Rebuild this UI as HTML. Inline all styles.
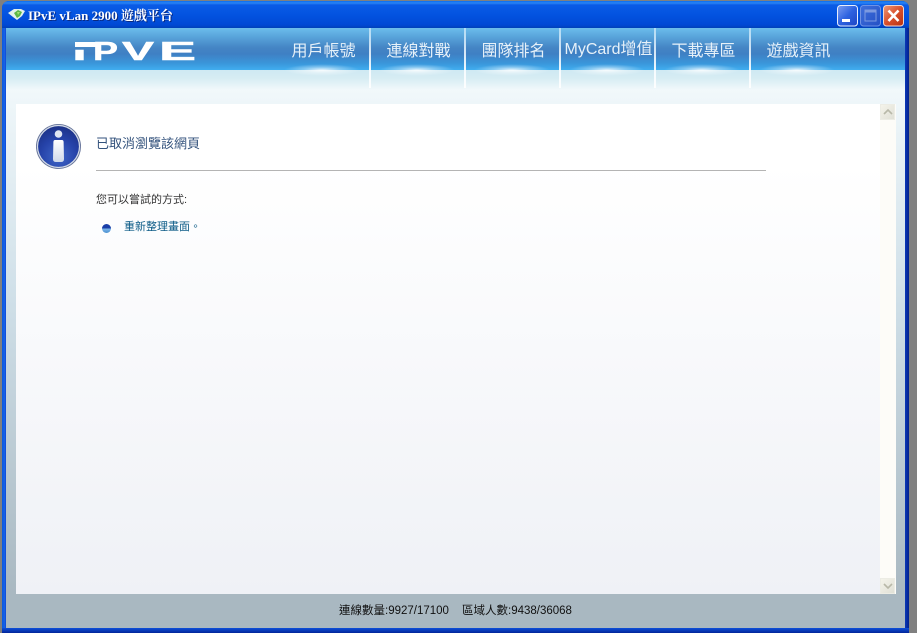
<!DOCTYPE html>
<html>
<head>
<meta charset="utf-8">
<title>IPvE vLan 2900</title>
<style>
html,body{margin:0;padding:0;width:917px;height:633px;overflow:hidden;background:#808080;font-family:"Liberation Sans","Noto Sans CJK TC",sans-serif}
div{position:absolute;box-sizing:border-box}
#win{left:2px;top:1px;width:907px;height:632px;background:linear-gradient(90deg,#0a5ae0 0,#1a62e6 3px,#0a3fd0 4px);border-radius:7px 7px 0 0;overflow:hidden}
#title{left:0;top:0;width:907px;height:27px;background:linear-gradient(180deg,#0a6ef0 0,#2a84f4 2px,#0a5be6 4px,#0353e0 14px,#0048d4 24px,#0040b8 27px)}
#rb{left:903px;top:27px;width:4px;height:605px;background:linear-gradient(90deg,#0a38b8,#02208c)}
#bb{left:0;top:627px;width:907px;height:5px;background:linear-gradient(180deg,#0e4fd8,#02259a)}
#ttext{left:26px;top:7px;font:bold 13px/16px "Liberation Serif","Noto Serif CJK SC",serif;color:#fff;white-space:nowrap;text-shadow:1px 1px 0 #0a2a80}
#client{left:4px;top:27px;width:899px;height:600px;background:linear-gradient(180deg,#f2f8fb 60px,#eef6f9 76px,#cfdfe8 272px,#a9b8c1 566px,#a9b8c1 600px)}
#hdr{left:0;top:0;width:899px;height:42px;background:linear-gradient(180deg,#6cbdec 0,#5aa6dc 8px,#4484c4 20px,#3f80c4 26px,#3a98dc 36px,#40aef0 42px)}
#sub{left:0;top:42px;width:899px;height:20px;background:linear-gradient(180deg,#cfe9f3 0,#d6ecf3 8px,#edf6fa 18px,#f2f8fb 20px)}
.sep{top:0;width:2px;height:60px;background:linear-gradient(180deg,rgba(210,235,250,.7),rgba(240,248,255,.85) 40%,rgba(248,252,255,.95) 70%,rgba(255,255,255,.9))}
.nav{top:13px;width:95px;height:22px;text-align:center;font-size:16px;line-height:22px;color:#e6f1f9;white-space:nowrap;font-family:"Liberation Sans","WenQuanYi Zen Hei",sans-serif}
.glow{top:36px;width:76px;height:12px;background:radial-gradient(ellipse at center,rgba(255,255,255,.85) 0,rgba(255,255,255,.35) 35%,rgba(255,255,255,0) 70%)}
#main{left:10px;top:76px;width:864px;height:490px;background:linear-gradient(180deg,#fff 0,#fff 60px,#eff1f6 490px)}
#sb{left:874px;top:76px;width:16px;height:490px;background:#fdfcf8}
.sbtn{left:0;width:15px;height:16px;background:linear-gradient(135deg,#f4f3ea,#e0e0d6);border:1px solid #ecece4}
#h1{left:80px;top:31px;font-size:13px;line-height:18px;color:#33527c;white-space:nowrap}
#hr{left:80px;top:66px;width:670px;height:1px;background:#b4b4b4}
#p1{left:80px;top:88px;font-size:11px;line-height:17px;color:#333;white-space:nowrap}
#lnk{left:108px;top:115px;font-size:11px;line-height:17px;color:#0a5a86;white-space:nowrap}
#dot{left:86px;top:120px;width:9px;height:9px;border-radius:50%;background:linear-gradient(180deg,#1a3fa8 0,#1a3fa8 45%,#7ab4e8 55%,#4a90d0 100%)}
#st{left:0;top:567px;width:899px;height:33px;font-size:11.5px;line-height:33px;color:#111;white-space:pre}
#st span{position:absolute;top:0}
</style>
</head>
<body>
<div id="win">
  <div id="title"></div>
  <svg style="position:absolute;left:6px;top:7px" width="18" height="14" viewBox="0 0 18 14">
    <path d="M0 5 L6 1 L13 1 L17 3 L14 8 L9 12 L5 9 Z" fill="#e2f2ea"/>
    <path d="M6 5 L10 2 L14 4 L12 8 L9 10 Z" fill="#5cb845"/>
    <path d="M9 4 L12 4 L10 7 Z" fill="#a4e070"/>
  </svg>
  <div id="ttext">IPvE vLan 2900 遊戲平台</div>

  <svg style="position:absolute;left:835px;top:4px" width="68" height="22" viewBox="0 0 68 22">
    <defs>
      <linearGradient id="bl" x1="0" y1="0" x2="1" y2="1"><stop offset="0" stop-color="#7d9ff2"/><stop offset=".5" stop-color="#2d62e0"/><stop offset="1" stop-color="#1c45c4"/></linearGradient>
      <linearGradient id="bd" x1="0" y1="0" x2="1" y2="1"><stop offset="0" stop-color="#3f6fdc"/><stop offset="1" stop-color="#2450c4"/></linearGradient>
      <linearGradient id="rd" x1="0" y1="0" x2="1" y2="1"><stop offset="0" stop-color="#ef9a78"/><stop offset=".5" stop-color="#d9502c"/><stop offset="1" stop-color="#b8300f"/></linearGradient>
    </defs>
    <rect x=".5" y=".5" width="20" height="20.5" rx="3" fill="url(#bl)" stroke="#e8eefc"/>
    <rect x="5" y="14" width="8" height="3" fill="#fff"/>
    <rect x="23.5" y=".5" width="20" height="20.5" rx="3" fill="url(#bd)" stroke="#6f92e4"/>
    <rect x="28" y="5" width="11" height="11" fill="none" stroke="#7d9ae0"/>
    <rect x="28" y="5" width="11" height="2.5" fill="#7d9ae0"/>
    <rect x="46.5" y=".5" width="20" height="20.5" rx="3" fill="url(#rd)" stroke="#f0d8d0"/>
    <path d="M51.5 5.5 L61.5 16 M61.5 5.5 L51.5 16" stroke="#fff" stroke-width="2.6"/>
  </svg>

  <div id="rb"></div>
  <div id="bb"></div>

  <div id="client">
    <div id="hdr"></div>
    <div id="sub"></div>

    <svg style="position:absolute;left:0;top:0" width="210" height="42" viewBox="6 28 210 42" font-family="Liberation Sans" font-weight="700" fill="#fff" stroke="#fff" stroke-width=".5">
      <rect x="75" y="42" width="26" height="5" stroke="none"/>
      <text x="73" y="60" font-size="14.5" textLength="13" lengthAdjust="spacingAndGlyphs">I</text>
      <text x="93" y="60" font-size="26" textLength="25" lengthAdjust="spacingAndGlyphs">P</text>
      <text x="122" y="60" font-size="26" textLength="32" lengthAdjust="spacingAndGlyphs">V</text>
      <text x="159" y="60" font-size="26" textLength="37" lengthAdjust="spacingAndGlyphs">E</text>
    </svg>

    <div class="glow" style="left:278px"></div>
    <div class="glow" style="left:373px"></div>
    <div class="glow" style="left:468px"></div>
    <div class="glow" style="left:563px"></div>
    <div class="glow" style="left:658px"></div>
    <div class="glow" style="left:753px"></div>

    <div class="nav" style="left:270px">用戶帳號</div>
    <div class="nav" style="left:365px">連線對戰</div>
    <div class="nav" style="left:460px">團隊排名</div>
    <div class="nav" style="left:555px;top:11px">MyCard增值</div>
    <div class="nav" style="left:650px">下載專區</div>
    <div class="nav" style="left:745px">遊戲資訊</div>

    <div class="sep" style="left:363px"></div>
    <div class="sep" style="left:458px"></div>
    <div class="sep" style="left:553px"></div>
    <div class="sep" style="left:648px"></div>
    <div class="sep" style="left:743px"></div>

    <div id="main">
      <svg style="position:absolute;left:20px;top:20px" width="46" height="46" viewBox="0 0 46 46">
        <defs>
          <radialGradient id="ib" cx=".5" cy=".75" r=".75"><stop offset="0" stop-color="#3f66c8"/><stop offset=".6" stop-color="#2542a8"/><stop offset="1" stop-color="#1c3288"/></radialGradient>
          <linearGradient id="iw" x1="0" y1="0" x2="0" y2="1"><stop offset="0" stop-color="#fff"/><stop offset="1" stop-color="#cfd9ea"/></linearGradient>
        </defs>
        <circle cx="22.5" cy="22.5" r="22.5" fill="#66749a"/>
        <circle cx="22.5" cy="22.5" r="21.6" fill="#d5dce8"/>
        <circle cx="22.5" cy="22.5" r="20.4" fill="url(#ib)"/>
        <circle cx="22.5" cy="10" r="3.8" fill="#dfe6f2"/>
        <path d="M19 16 H26 Q27.5 16 27.6 18 L28 35 Q28 38 25 38 H20 Q17 38 17 35 L17.4 18 Q17.5 16 19 16 Z" fill="url(#iw)"/>
      </svg>
      <div id="h1">已取消瀏覽該網頁</div>
      <div id="hr"></div>
      <div id="p1">您可以嘗試的方式:</div>
      <div id="dot"></div>
      <div id="lnk">重新整理畫面。</div>
    </div>

    <div id="sb">
      <div class="sbtn" style="top:0"></div>
      <div class="sbtn" style="top:474px"></div>
      <svg style="position:absolute;left:3px;top:5px" width="10" height="6"><path d="M1 5 L5 1 L9 5" fill="none" stroke="#b8b8a8" stroke-width="1.6"/></svg>
      <svg style="position:absolute;left:3px;top:479px" width="10" height="6"><path d="M1 1 L5 5 L9 1" fill="none" stroke="#b8b8a8" stroke-width="1.6"/></svg>
    </div>

    <div id="st"><span style="left:333px">連線數量:9927/17100</span><span style="left:456px">區域人數:9438/36068</span></div>
  </div>
</div>
</body>
</html>
